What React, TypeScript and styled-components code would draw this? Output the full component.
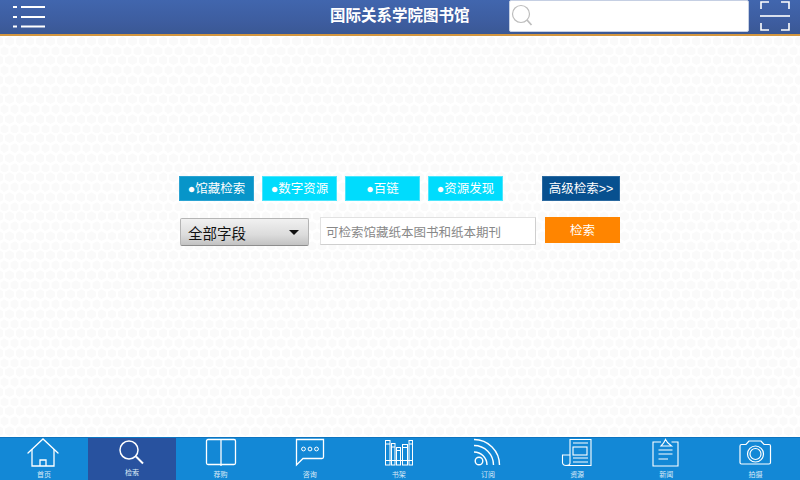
import React from "react";
import styled, { createGlobalStyle } from "styled-components";

const Global = createGlobalStyle`
  html, body { margin: 0; padding: 0; background: #fff; }
  body { font-family: "Liberation Sans", "Noto Sans CJK SC", sans-serif; }
  * { box-sizing: border-box; }
`;

const hexTile = encodeURIComponent(
  `<svg xmlns="http://www.w3.org/2000/svg" width="41" height="78" viewBox="0 0 10.25 19.5"><g fill="#fafafa"><path d="M5.125 0.2 L9.3 2.6 V7.4 L5.125 9.8 L0.95 7.4 V2.6 Z"/><path d="M0 9.95 L4.175 12.35 V17.15 L0 19.55 L-4.175 17.15 V12.35 Z"/><path d="M10.25 9.95 L14.425 12.35 V17.15 L10.25 19.55 L6.075 17.15 V12.35 Z"/></g></svg>`
);

const Page = styled.div`
  width: 800px;
  height: 480px;
  display: flex;
  flex-direction: column;
  overflow: hidden;
`;

const Header = styled.header`
  height: 36px;
  flex: none;
  display: flex;
  align-items: center;
  padding: 0 0 2px 12px;
  background: linear-gradient(#4166ae, #3d5c9e 70%, #3a5894);
  border-bottom: 2px solid #d3963f;
`;

const HeaderButton = styled.div`
  flex: none;
  display: flex;
  svg { display: block; }
`;

const Title = styled.h1`
  flex: none;
  margin: 0 0 0 282px;
  color: #fff;
  font-size: 15.5px;
  font-weight: 700;
  line-height: 34px;
`;

const SearchBox = styled.div`
  flex: none;
  width: 240px;
  height: 32px;
  margin: 0 11px 0 auto;
  display: flex;
  align-items: center;
  padding-left: 1px;
  background: #fff;
  border: 1px solid #c5cfe3;
  border-radius: 2px;
`;

const Main = styled.main`
  flex: 1;
  display: flex;
  flex-direction: column;
  align-items: flex-start;
  gap: 16px;
  padding: 140px 0 0 179px;
  background-color: #fff;
  background-image: url("data:image/svg+xml,${hexTile}");
  background-size: 10.25px 19.5px;
  background-position: 4.4px 0;
`;

const TabRow = styled.div`
  display: flex;
  gap: 8px;
`;

const Tab = styled.div<{ $active?: boolean }>`
  width: 75px;
  height: 25px;
  display: flex;
  align-items: center;
  justify-content: center;
  padding-bottom: 2px;
  color: #fff;
  font-size: 12.5px;
  background: ${(p) => (p.$active ? "#0795c9" : "#00dcfd")};
  border: 1px solid ${(p) => (p.$active ? "#2aa3d2" : "#4ce5fc")};
`;

const AdvancedTab = styled(Tab)`
  width: 78px;
  margin-left: 31px;
  background: #07508f;
  border-color: #2a69a0;
`;

const FormRow = styled.div`
  display: flex;
  align-items: flex-start;
`;

const Select = styled.div`
  width: 129px;
  height: 28px;
  margin: 1px 11px 0 1px;
  display: flex;
  align-items: center;
  justify-content: space-between;
  padding: 0 9px 0 7px;
  color: #111;
  font-size: 14.5px;
  background: linear-gradient(#f1f1f1, #dcdcdc 60%, #c2c2c2);
  border: 1px solid #b5b5b5;
  border-bottom-color: #8d8d8d;
  border-radius: 2px;
`;

const Arrow = styled.span`
  width: 0;
  height: 0;
  border-left: 5px solid transparent;
  border-right: 5px solid transparent;
  border-top: 5px solid #111;
`;

const QueryInput = styled.div`
  width: 216px;
  height: 28px;
  display: flex;
  align-items: center;
  padding-left: 5px;
  color: #888;
  font-size: 12.5px;
  background: #fff;
  border: 1px solid #e2e2e2;
  border-right-color: #cfcfcf;
  border-bottom-color: #cfcfcf;
`;

const SearchButton = styled.div`
  width: 75px;
  height: 26px;
  margin-left: 9px;
  display: flex;
  align-items: center;
  justify-content: center;
  padding-bottom: 1px;
  color: #fff;
  font-size: 12.5px;
  background: #ff8500;
`;

const Footer = styled.nav`
  height: 43px;
  flex: none;
  display: grid;
  grid-template-columns: 88px 88px repeat(7, 1fr);
  background: #1388d6;
  border-top: 1px solid #0d74c0;
`;

const FooterItem = styled.div<{ $active?: boolean }>`
  display: flex;
  flex-direction: column;
  align-items: center;
  overflow: hidden;
  background: ${(p) => (p.$active ? "#28529f" : "transparent")};
  svg { display: block; flex: none; }
`;

const FooterLabel = styled.span<{ $active?: boolean }>`
  margin-top: ${(p) => (p.$active ? "-1px" : "1px")};
  color: #dbeaf7;
  font-size: 7px;
  line-height: 9px;
`;

const line = { fill: "none", stroke: "#fff", strokeWidth: 1.3 };

const icons: Record<string, React.ReactNode> = {
  home: (
    <g {...line}>
      <path d="M13 15 L28 1 L43 15" strokeLinecap="round" />
      <path d="M17 11 V28 H39 V11" />
      <path d="M25 28 V22 H31 V28" />
    </g>
  ),
  search: (
    <g {...line} strokeWidth={1.5}>
      <circle cx="26" cy="12" r="9" />
      <path d="M33 18.500 L40 25.500" strokeWidth={2} />
    </g>
  ),
  book: (
    <g {...line}>
      <rect x="14.500" y="1.500" width="29" height="25" rx="1.5" />
      <path d="M29 1.500 V28" />
    </g>
  ),
  chat: (
    <g {...line}>
      <path d="M15.500 1.500 H42.500 V19 Q42.500 20.500 41 20.500 H22 L15.500 27 V1.500 Z" />
      <circle cx="22.500" cy="11" r="1.900" strokeWidth={1} />
      <circle cx="29" cy="11" r="1.900" strokeWidth={1} />
      <circle cx="35.500" cy="11" r="1.900" strokeWidth={1} />
    </g>
  ),
  shelf: (
    <g fill="none" stroke="#fff" strokeWidth={1}>
      <rect x="15.500" y="2.500" width="4.500" height="24.500" />
      <rect x="21.500" y="5.500" width="3.500" height="21.500" />
      <rect x="26.500" y="9.500" width="4" height="17.500" />
      <rect x="32.500" y="6.500" width="5" height="20.500" />
      <rect x="39" y="2.500" width="3.500" height="24.500" />
      <path d="M15.500 6 H20 M15.500 22.500 H42.500 M21.500 9 H25 M26.500 12.500 H30.500 M32.500 9.500 H37.500 M39 6 H42.500" />
    </g>
  ),
  rss: (
    <g {...line} strokeWidth={1.4}>
      <circle cx="20" cy="23" r="3.800" />
      <path d="M15 14 A13 13 0 0 1 28 27" />
      <path d="M15 7.500 A19.500 19.500 0 0 1 34.500 27" />
      <path d="M15 1.500 A25.500 25.500 0 0 1 40.500 27" />
    </g>
  ),
  paper: (
    <g {...line} strokeWidth={1.1}>
      <path d="M22 17 V1.500 H43 V27.500 H18 Q15 27.500 14.500 25 V17 H22 V25 Q22 27.500 18 27.500" />
      <path d="M25 5 H40 M25 20 H40 M25 24 H40" />
      <rect x="25" y="9" width="14" height="8" />
    </g>
  ),
  clip: (
    <g {...line} strokeWidth={1.1}>
      <path d="M24 4 H16 V28 H41 V4 H34.500" />
      <path d="M24 8 Q27 5 28.500 1.500 Q30 5 34.500 8 Z" />
      <path d="M21.500 12 H35.500 M21.500 16 H35.500 M21.500 21 H31" />
    </g>
  ),
  camera: (
    <g {...line} strokeWidth={1.2}>
      <path d="M14 8 Q14 6.500 15.500 6.500 H20 L23 3 H35 L38 6.500 H43 Q44.500 6.500 44.500 8 V24.500 Q44.500 26 43 26 H15.500 Q14 26 14 24.500 Z" />
      <circle cx="29.500" cy="16" r="8" />
      <circle cx="29.500" cy="16" r="5.500" />
    </g>
  ),
};

const tabs = [
  { key: "home", label: "首页" },
  { key: "search", label: "检索", active: true },
  { key: "book", label: "荐购" },
  { key: "chat", label: "咨询" },
  { key: "shelf", label: "书架" },
  { key: "rss", label: "订阅" },
  { key: "paper", label: "资源" },
  { key: "clip", label: "新闻" },
  { key: "camera", label: "拍摄" },
];

const App = () => {
  return (
    <Page>
      <Global />
      <Header>
        <HeaderButton>
          <svg width="36" height="30" viewBox="0 0 36 30">
            <g fill="#fff">
              <rect x="1" y="5" width="4" height="2" />
              <rect x="9" y="5" width="24" height="2" />
              <rect x="1" y="15" width="4" height="2" />
              <rect x="9" y="15" width="24" height="2" />
              <rect x="1" y="24.500" width="4" height="2" />
              <rect x="9" y="24.500" width="24" height="2" />
            </g>
          </svg>
        </HeaderButton>
        <Title>国际关系学院图书馆</Title>
        <SearchBox>
          <svg width="22" height="26" viewBox="0 0 22 26">
            <g fill="none" stroke="#bdbdbd">
              <circle cx="10" cy="11" r="8.500" strokeWidth={1.2} />
              <path d="M16 17 L20.500 22" strokeWidth={1.8} />
            </g>
          </svg>
        </SearchBox>
        <HeaderButton>
          <svg width="30" height="30" viewBox="0 0 30 30" style={{ marginRight: 10 }}>
            <g fill="none" stroke="#fff" strokeWidth={1.6}>
              <path d="M1 8 V1 H9 M21 1 H29 V8 M1 22 V29 H9 M21 29 H29 V22" />
              <path d="M0 15 H30" />
            </g>
          </svg>
        </HeaderButton>
      </Header>
      <Main>
        <TabRow>
          <Tab $active>●馆藏检索</Tab>
          <Tab>●数字资源</Tab>
          <Tab>●百链</Tab>
          <Tab>●资源发现</Tab>
          <AdvancedTab>高级检索&gt;&gt;</AdvancedTab>
        </TabRow>
        <FormRow>
          <Select>
            全部字段
            <Arrow />
          </Select>
          <QueryInput>可检索馆藏纸本图书和纸本期刊</QueryInput>
          <SearchButton>检索</SearchButton>
        </FormRow>
      </Main>
      <Footer>
        {tabs.map((t) => (
          <FooterItem key={t.key} $active={t.active}>
            <svg width="58" height="31" viewBox="0 0 58 31">
              {icons[t.key]}
            </svg>
            <FooterLabel $active={t.active}>{t.label}</FooterLabel>
          </FooterItem>
        ))}
      </Footer>
    </Page>
  );
};

export default App;
